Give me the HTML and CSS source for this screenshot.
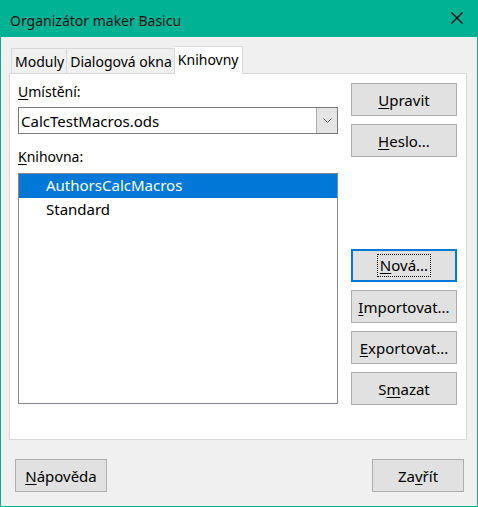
FILE: index.html
```html
<!DOCTYPE html>
<html lang="cs">
<head>
  <meta charset="UTF-8">
  <title>Organizátor maker Basicu</title>
  <link rel="stylesheet" href="styles.css">
</head>
<body>
  <div class="window">
    <div class="titlebar">
      <span class="title">Organizátor maker Basicu</span>
      <svg class="close" width="12" height="12" viewBox="0 0 12 12">
        <path d="M0.5 0.5 L11.5 11.5 M11.5 0.5 L0.5 11.5" stroke="#000" stroke-width="1.1" fill="none"/>
      </svg>
    </div>
    <div class="tabs">
      <div class="tab">Moduly</div>
      <div class="tab">Dialogová okna</div>
      <div class="tab active">Knihovny</div>
    </div>
    <div class="panel">
      <div class="left">
        <div class="label"><u>U</u>místění:</div>
        <div class="combo">
          <span class="combo-text">CalcTestMacros.ods</span>
          <span class="combo-btn">
            <svg width="9" height="5" viewBox="0 0 9 5"><path d="M0.5 0.5 L4.5 4.5 L8.5 0.5" stroke="#555" fill="none"/></svg>
          </span>
        </div>
        <div class="label second"><u>K</u>nihovna:</div>
        <div class="list">
          <div class="item selected">AuthorsCalcMacros</div>
          <div class="item">Standard</div>
        </div>
      </div>
      <div class="right">
        <button class="btn"><u>U</u>pravit</button>
        <button class="btn"><u>H</u>eslo...</button>
        <button class="btn focused spaced"><span class="focus-ring"><u>N</u>ová...</span></button>
        <button class="btn"><u>I</u>mportovat...</button>
        <button class="btn"><u>E</u>xportovat...</button>
        <button class="btn">S<u>m</u>azat</button>
      </div>
    </div>
    <div class="footer">
      <button class="btn wide"><u>N</u>ápověda</button>
      <button class="btn wide">Za<u>v</u>řít</button>
    </div>
  </div>
</body>
</html>
```

FILE: styles.css
```css
body {
  margin: 0;
  font-family: "Noto Sans", "Open Sans", sans-serif;
  font-size: 14px;
  color: #000;
}
u {
  text-decoration: underline;
  text-underline-offset: 2px;
}
.window {
  width: 478px;
  height: 507px;
  box-sizing: border-box;
  border: 1px solid #00b294;
  border-top: none;
  background: #f0f0f0;
  display: flex;
  flex-direction: column;
}
.titlebar {
  height: 37px;
  flex-shrink: 0;
  background: #00b294;
  display: flex;
  align-items: center;
  justify-content: space-between;
  padding: 0 15px 0 10px;
  margin: 0 -1px;
}
.title {
  font-size: 14px;
  color: #111;
  padding-top: 3px;
}
.close {
  display: block;
  margin-top: -2px;
}
.tabs {
  display: flex;
  align-items: flex-end;
  margin-top: 9px;
  padding-left: 10px;
  height: 27px;
  position: relative;
  z-index: 1;
}
.tab {
  height: 24px;
  line-height: 25px;
  padding: 0 2px 0 3px;
  border: 1px solid #d9d9d9;
  border-bottom: none;
  border-right: none;
  background: #f0f0f0;
}
.tab:nth-child(2) {
  border-right: 1px solid #d9d9d9;
}
.tab.active {
  height: 27px;
  line-height: 26px;
  background: #fff;
  border-left: none;
  border-right: 1px solid #d9d9d9;
  margin-bottom: -1px;
  padding: 0 3px;
}
.panel {
  height: 365px;
  margin: 0 10px 0 8px;
  border: 1px solid #d9d9d9;
  background: #fff;
  display: flex;
  padding: 0 8px 0 8px;
  gap: 13px;
}
.left {
  width: 320px;
  padding-top: 8px;
}
.label {
  height: 20px;
  line-height: 20px;
  margin-bottom: 5px;
}
.label.second {
  margin-top: 13px;
  margin-bottom: 6px;
}
.combo {
  height: 27px;
  box-sizing: border-box;
  border: 1px solid #7a7a7a;
  display: flex;
  align-items: center;
}
.combo-text {
  flex: 1;
  padding-left: 2px;
  font-size: 15px;
}
.combo-btn {
  width: 20px;
  height: 25px;
  background: #e5e5e5;
  border-left: 1px solid #adadad;
  display: flex;
  align-items: center;
  justify-content: center;
}
.list {
  height: 231px;
  box-sizing: border-box;
  border: 1px solid #828790;
}
.item {
  height: 24px;
  line-height: 22px;
  padding-left: 27px;
  font-size: 15px;
}
.item.selected {
  background: #0078d7;
  color: #fff;
}
.right {
  width: 106px;
  padding-top: 9px;
  display: flex;
  flex-direction: column;
  gap: 8px;
}
.btn {
  font: inherit;
  font-size: 15px;
  color: #000;
  height: 33px;
  box-sizing: border-box;
  background: #e1e1e1;
  border: 1px solid #adadad;
  padding: 0;
  display: flex;
  align-items: center;
  justify-content: center;
}
.btn.spaced {
  margin-top: 84px;
}
.btn.focused {
  border: 2px solid #0078d7;
}
.focus-ring {
  outline: 1px dotted #000;
  outline-offset: 0;
  padding: 1px 2px;
  line-height: 19px;
}
.footer {
  display: flex;
  justify-content: space-between;
  margin-top: 19px;
  padding: 0 13px 0 14px;
}
.btn.wide {
  width: 92px;
}
```
